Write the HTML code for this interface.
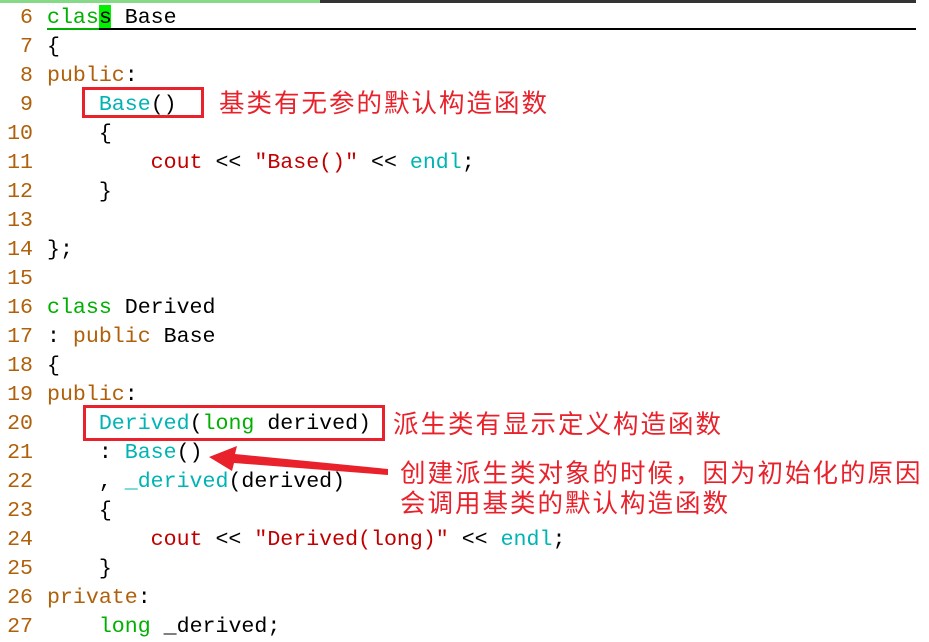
<!DOCTYPE html>
<html><head><meta charset="utf-8"><style>
body{margin:0;width:929px;height:629px;overflow:hidden;background:#fff;position:relative;font-family:"Liberation Mono",monospace;}
.l{position:absolute;left:0;height:29px;line-height:29px;font-size:21.6px;white-space:pre;}
.n{display:inline-block;width:33px;text-align:right;color:#b0600a;margin-right:14px;}
.k{color:#00b000}.p{color:#b0600a}.c{color:#00b4b4}.r{color:#c00000}.g{color:#00b000}
.ann{position:absolute;color:#e8212b;font-family:"Noto Sans CJK SC","WenQuanYi Zen Hei",sans-serif;font-size:25.5px;letter-spacing:2px;line-height:30px;white-space:nowrap;}
.box{position:absolute;border:3px solid #e8212b;box-sizing:border-box;}
</style></head><body>
<div style="position:absolute;left:0;top:0;width:320px;height:3px;background:#86d986"></div>
<div style="position:absolute;left:320px;top:0;width:596px;height:3px;background:#333"></div>
<div style="position:absolute;left:99px;top:5px;width:12px;height:25px;background:#00f000"></div>
<div style="position:absolute;left:47px;top:28px;width:52px;height:2px;background:#00b000"></div>
<div style="position:absolute;left:99px;top:28px;width:817px;height:2px;background:#000"></div>
<div class="l" style="top:4px"><span class="n">6</span><span class="k">clas</span>s Base</div>
<div class="l" style="top:33px"><span class="n">7</span>{</div>
<div class="l" style="top:62px"><span class="n">8</span><span class="p">public</span>:</div>
<div class="l" style="top:91px"><span class="n">9</span>    <span class="c">Base</span>()</div>
<div class="l" style="top:120px"><span class="n">10</span>    {</div>
<div class="l" style="top:149px"><span class="n">11</span>        <span class="r">cout</span> &lt;&lt; <span class="r">"Base()"</span> &lt;&lt; <span class="c">endl</span>;</div>
<div class="l" style="top:178px"><span class="n">12</span>    }</div>
<div class="l" style="top:207px"><span class="n">13</span></div>
<div class="l" style="top:236px"><span class="n">14</span>};</div>
<div class="l" style="top:265px"><span class="n">15</span></div>
<div class="l" style="top:294px"><span class="n">16</span><span class="k">class</span> Derived</div>
<div class="l" style="top:323px"><span class="n">17</span>: <span class="p">public</span> Base</div>
<div class="l" style="top:352px"><span class="n">18</span>{</div>
<div class="l" style="top:381px"><span class="n">19</span><span class="p">public</span>:</div>
<div class="l" style="top:410px"><span class="n">20</span>    <span class="c">Derived</span>(<span class="g">long</span> derived)</div>
<div class="l" style="top:439px"><span class="n">21</span>    : <span class="c">Base</span>()</div>
<div class="l" style="top:468px"><span class="n">22</span>    , <span class="c">_derived</span>(derived)</div>
<div class="l" style="top:497px"><span class="n">23</span>    {</div>
<div class="l" style="top:526px"><span class="n">24</span>        <span class="r">cout</span> &lt;&lt; <span class="r">"Derived(long)"</span> &lt;&lt; <span class="c">endl</span>;</div>
<div class="l" style="top:555px"><span class="n">25</span>    }</div>
<div class="l" style="top:584px"><span class="n">26</span><span class="p">private</span>:</div>
<div class="l" style="top:613px"><span class="n">27</span>    <span class="g">long</span> _derived;</div>
<div class="box" style="left:82px;top:87px;width:122px;height:31px"></div>
<div class="box" style="left:83px;top:405px;width:302px;height:36px"></div>
<div class="ann" style="left:219px;top:87px">基类有无参的默认构造函数</div>
<div class="ann" style="left:393px;top:408px">派生类有显示定义构造函数</div>
<div class="ann" style="left:400px;top:457px">创建派生类对象的时候，因为初始化的原因<br>会调用基类的默认构造函数</div>
<svg style="position:absolute;left:0;top:0" width="929" height="629">
<polygon points="209,457 237,446 235,454 388,469 388,475 234,463 232,471" fill="#e8212b"/>
</svg>
</body></html>
